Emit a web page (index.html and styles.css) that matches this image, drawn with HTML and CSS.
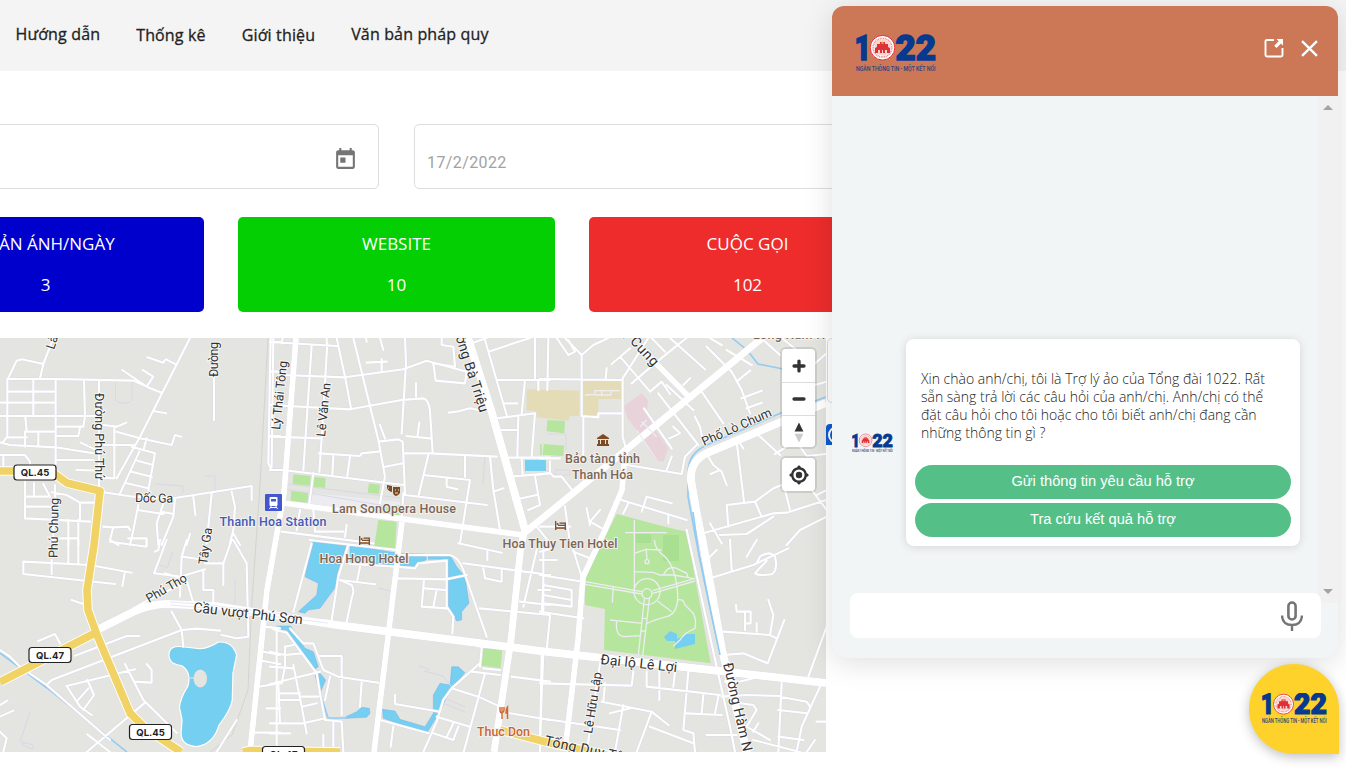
FILE: index.html
```html
<!DOCTYPE html>
<html lang="vi">
<head>
<meta charset="utf-8">
<title>Thống kê - 1022</title>
<link rel="stylesheet" href="styles.css">
</head>
<body>
<svg class="sprite" aria-hidden="true">
  <symbol id="logo" viewBox="0 0 80 38">
    <g class="logo-digits"><text x="-1.500" y="26.200" textLength="16.500" lengthAdjust="spacingAndGlyphs">1</text>
    <text x="39.500" y="26.200" textLength="40.500" lengthAdjust="spacingAndGlyphs">22</text></g>
    <circle cx="26.500" cy="13.700" r="12.300" fill="#fff" stroke="#df3038" stroke-width="1"/>
    <circle cx="26.500" cy="13.700" r="9.300" fill="none" stroke="#e98a8b" stroke-width="1.800" stroke-dasharray="1 .7"/>
    <circle cx="26.500" cy="13.500" r="8.200" fill="#f9d4cf"/>
    <path d="M19 19v-5l2-1v-3h3V8h5v2h3v3l2 1v5h-3v-3h-2v3h-2v-3h-1v3h-2v-3h-2v3z" fill="#df3038"/>
    <circle cx="26.500" cy="9" r="1.200" fill="#f29b32"/>
    <text class="logo-tag" x="0" y="36.500" textLength="79.500" lengthAdjust="spacingAndGlyphs">NGÀN THÔNG TIN - MỘT KẾT NỐI</text>
  </symbol>
  <symbol id="bed" viewBox="0 0 11 9"><path d="M.7 0v9M.7 7h9.600v2M3 4.300h7.300V7M4.500 2.200h5.800v2" fill="none" stroke="#7d4a24" stroke-width="1.300"/><circle cx="2.600" cy="3" r="1" fill="#7d4a24"/></symbol>
</svg>

<header class="topbar">
  <nav class="menu">
    <a class="menu-item">Hướng dẫn</a>
    <a class="menu-item menu-item-low">Thống kê</a>
    <a class="menu-item menu-item-low">Giới thiệu</a>
    <a class="menu-item">Văn bản pháp quy</a>
  </nav>
</header>

<main class="content">
  <section class="filters">
    <div class="field field-from">
      <svg class="cal" viewBox="0 0 24 24"><path fill="#757575" d="M19 3h-1V1h-2v2H8V1H6v2H5c-1.110 0-1.990.9-1.990 2L3 19c0 1.100.89 2 2 2h14c1.100 0 2-.9 2-2V5c0-1.100-.9-2-2-2zm0 16H5V8h14v11zM7 10h5v5H7z"/></svg>
    </div>
    <div class="field field-to">17/2/2022</div>
  </section>
  <section class="stats">
    <div class="stat stat-blue"><span>PHẢN ÁNH/NGÀY</span><span>3</span></div>
    <div class="stat stat-green"><span>WEBSITE</span><span>10</span></div>
    <div class="stat stat-red"><span>CUỘC GỌI</span><span>102</span></div>
  </section>
  <section class="map-row">
    <div class="map">
      <svg class="map-canvas" viewBox="0 338 826 414">
        <defs>
          <g id="minor">
            <g transform="translate(0 330) scale(.33333)">
              <path d="M22 150L50 92 65 88 130 102 160 24M130 102L120 145M22 147H165L400 152M22 147V320L8 337M22 185H165M0 218H165M0 258H290M100 150V258M167 150V400M252 152L255 260 250 290H167M76 262L80 305H165M75 305V350M20 322H80M115 308V345M0 337L30 345 167 352 280 370M167 318H235L240 292M297 150V480M242 338L285 358M167 390H280M310 285L350 290 378 278M343 290V445L300 442M305 345H400M350 305L420 325 515 345 525 315 543 320M570 24L420 320 350 445M400 152L440 170 485 188M367 120L440 170 460 140 428 120M442 82L490 98Q498 82 505 92L528 103M460 243L498 250M440 325L432 355M395 350L465 370 445 480M418 365L360 490M412 392L460 405M395 425L455 440M380 460L445 475M642 140V270"/>
              <path d="M300 485L400 500 520 505 755 468V510M580 500L586 555M635 490L620 640M695 485L705 530 700 600 690 640M700 610L720 645M230 420L300 422M0 375H75L90 395V430M10 380V410M75 455V565M75 500H150M75 530H160M75 565L270 575M102 460V498M130 462L150 500M165 465V500M155 487L200 495 240 518H280M240 518V570M205 570V645M235 570V645M160 510V640M160 625H235M412 540L490 552M415 525L400 600 390 645M490 520L470 580 475 645M525 505L520 560 485 645M485 545L520 552M310 590L340 592 330 630 355 645M340 592L385 590 390 600M385 625H440V645M570 612L560 645M812 24L805 400 815 420H840M820 36H840M812 125H840M812 318H840"/>
            </g>
            <g transform="translate(270 330) scale(.33333)">
              <path d="M0 36L200 48M38 24L35 40M10 24L5 410M125 46L100 420M172 40L155 325M170 24V40M200 24L225 140 243 235M250 24L325 330 345 440 330 520M40 135L225 142 400 118 470 92 590 125M290 98L350 95M335 88V125M330 24L340 60M288 24L290 35M405 24L408 100 395 310M438 160V200M490 100L497 152 585 160 590 125M0 225L240 238 395 210 460 205Q478 212 480 245L488 368M537 248L560 245 600 235 625 240M0 320L155 325 148 425M148 370L270 378 275 370 325 365M190 378L187 435M240 380L232 438M330 285L345 325M325 335L385 328 398 335 405 490M345 410L400 400M410 318L480 325M448 278L443 315M405 370L480 370 680 380"/>
              <path d="M475 375L445 500M460 435L600 450 570 640M530 445V470L562 478M585 378V440M660 380L670 480 690 600M0 420H40L400 465M405 495L650 525M670 485L700 475M515 24V45L550 50 555 110 490 100M605 40L650 24M645 30L710 255M655 65L780 24M680 150H840M795 24V150M805 150V180M765 150L755 250M700 220H742M680 265L795 250 785 380M745 260L742 380M680 300H742M710 383H840M720 440L840 430M755 385L758 435M795 440L810 525 775 540M730 510L800 495M130 430L118 520M400 490L395 565M800 590L840 640M35 605L310 640M90 540L80 600M130 540L135 605H220M230 585L225 620"/>
            </g>
            <g transform="translate(540 330) scale(.33333)">
              <path d="M25 24L22 180M0 147L245 150M85 30L105 65 85 75M50 24L85 75M75 24L125 75V255M125 75L160 45 205 24M200 115L197 145M248 145L325 24M240 80L330 185M215 102L270 55M275 160L345 100 400 55 440 24M330 185L365 155 390 192M248 145V320L262 370M125 258L175 262V250H245M130 262V385M0 385H60M335 24L375 65M390 24L495 118M510 24L545 45M355 190L475 345M312 235L395 355M380 165L460 240M430 165L450 145M485 185L550 280M465 260L480 290 490 340M500 50L575 125 605 180 630 250M590 155L630 122M605 205L665 182M620 235L665 218M560 60L635 105M670 30L720 75M725 24L770 60M825 100L860 70M825 165L860 155M655 315L720 375M780 350L800 378 860 372M400 290L420 310 388 325M262 405L425 432 435 380 470 345M395 380L380 420"/>
              <path d="M590 335L612 515M600 340L610 355M505 380L520 405 545 425 560 465M512 432L540 420M705 372L740 350M490 610L700 550 740 548 860 510M565 590L560 525 645 515 700 475 740 460M645 515L665 560M510 580L545 640M540 615L620 612 700 560M735 480L750 540M800 460L860 540M830 495L860 480M860 560L780 600 740 645M-10 435L30 428 40 440H65L100 485M30 395V425M245 510L440 570M265 520L250 550M320 500L305 545M320 500L395 520M385 555V580M140 535L150 585M180 540L150 575 195 600M75 530L90 640M0 590H90"/>
            </g>
            <g transform="translate(0 540) scale(.33333)">
              <path d="M70 65L270 75 395 98M70 65V102L345 132M155 60V102M205 0V70M235 0V72M375 95L367 138M215 180L250 192M330 5L440 20V0M480 0L475 30 465 35M500 0L462 100 540 110 615 88M560 0L545 50 540 170M550 50L600 58M495 100L560 120 580 190M610 90V150H640V185M615 70H670L695 0M670 70V135M700 0L740 70 745 290 710 295 665 285M115 303L165 282 180 310M225 347L380 288H418M140 435L155 420 545 270 590 266 660 272M515 215L545 270 550 320M200 438L405 388M200 438L240 500 275 525M262 420L282 465 250 510M265 445L230 485M375 372L430 480 530 578M402 425L455 428V390L440 372M435 488L260 636M262 583L330 636M0 330L30 350 60 380 140 435 330 600M0 495L22 482M0 530L40 512M0 575L20 595 10 636M710 540L650 636M790 260L840 265M790 335L840 345M785 362L840 372M775 440L840 430M800 505H840M765 578H840M830 265V630M400 205L445 180 540 135"/>
            </g>
            <g transform="translate(270 540) scale(.33333)">
              <path d="M125 10L70 215M120 0L380 30M235 15L205 110 185 240M210 120L245 135Q255 150 245 175L230 245M210 120L315 133M272 70L262 120M240 72L380 80 435 85 445 70 530 62V200L550 230 547 280M395 45L540 45Q565 50 580 90L650 290M380 115L530 118 590 105M462 120L455 200 530 205M465 145L525 150M500 150L490 200M565 10L695 38M652 30V60M580 70L840 105M640 85L645 115 695 125V90M630 205L840 225M800 30L760 200M750 185L840 195M820 30V220M805 150H840M10 268L50 278 140 400 150 460 165 540 215 545 220 636M60 265L100 310H130L160 390 205 410 325 428M145 348H215V410M180 410L165 480M0 335L45 345 95 340M45 320L70 315M45 320V380L35 430M0 380L70 385M0 432L150 395M70 375L95 500 110 580M25 460H90M25 480H90M95 500L140 490M90 470H145M25 430L30 550M0 550H100L165 535M60 580H0M215 410V525M275 425L270 500M160 585V636M190 545V636"/>
              <path d="M375 465V492L510 515M330 540L475 580M370 560L362 620M630 370L545 445 520 480 500 545 460 636M545 445L625 470 690 500M645 400L580 640M605 395L690 405M640 385L690 390M635 325L630 380M500 530L600 560M550 550L530 590M490 580L550 600 565 560M725 410L840 425M720 520L840 540M820 335L810 600M630 320H690"/>
            </g>
            <g transform="translate(540 540) scale(.33333)">
              <path d="M0 105L130 125M100 30L125 110M0 60H50M0 35L40 25M150 55L100 35M10 135L95 150V200L10 190M10 130L5 220M10 165L95 180M0 215L130 235M30 230L20 330M5 340L0 636M510 115L640 75 745 25M510 50L530 30M575 90L570 0M620 50L650 0M680 62L645 100Q655 108 695 103 715 90 705 50 690 30 660 50L650 70M550 275L690 285 710 295M588 195L590 215H632V250H615M615 215V270M650 250V275M685 180L700 225 690 285M733 240L683 370 610 340 550 345M858 265L805 410M0 430L275 437L280 395M195 430L190 485M185 485L335 515 385 555M210 520L270 505M250 495L225 636M0 535L240 570M180 370L140 636M320 395V440L540 465M358 390V480M405 395L400 440M445 395L430 570 460 580 465 636M490 465L485 520M440 520L545 525M535 470L525 520M440 -30L530 380 550 470 570 560 585 636M335 515L290 636M330 560L460 610"/>
              <path d="M545 470L620 465 720 468M570 485L640 495 650 510 620 560 690 600M500 585H590M640 575L655 550M725 430L715 636M720 470L800 485 810 500M715 510L800 520M715 590L790 600M640 600L780 636M840 440L785 560 770 636M830 545H860M800 636L825 600M580 430L640 415M555 425H590"/>
            </g>
          </g>
          <g id="major">
            <g class="w1"><path d="M296 338L284 493 274 550 267 590 250 752M283 503L523 535M402 522L374 752M643 350L689 397M625 453L622 490 605 530 583 577 578 640 566 742"/></g>
            <g class="w2"><path d="M523 534L610 463 762 338M525 530L521 545 511 640 494 752"/></g>
            <g class="w3"><path d="M468 338L492 413 525 530M826 403L707 453Q690 461 691 480L697 515 703 543 722 650 747 752M97 630L133 612Q150 604 167 604L215 606 337 625 510 647 540 651 826 683"/></g>
          </g>
          <g id="highway">
            <path d="M0 471H37L52 472 67 483 100 491 94 545 87 590 88 610 97 635 130 713 145 728 181 752M0 682L97 632M500 730L550 743 610 756M243 752L250 750.500 340 752"/>
          </g>
        </defs>
        <rect y="338" width="826" height="414" fill="#e4e4e0"/>
        <g fill="#b6e59d">
          <g transform="translate(540 330) scale(.33333)"><path d="M22 270L75 273 73 310 20 304ZM12 342L72 347 70 378 8 374ZM0 342H5V375H0Z"/></g>
          <path transform="translate(540 540) scale(.33333)" d="M230 -78L375 -40 440 -25 512 370 192 330 195 207 135 195V110Z"/>
        </g>
        <path fill="#a9df90" d="M663 535H679V561H663ZM636 534H651V543H636Z"/>
        <g fill="#e4dcb7" transform="translate(540 330) scale(.33333)"><path d="M130 152H243V207H175V255H130ZM-40 178L118 182V258H90L85 272 -10 262V245L-40 240Z"/></g>
        <path transform="translate(540 330) scale(.33333)" fill="#e8d3db" d="M252 228L305 190 325 212 318 250 340 290 385 355 370 395 345 390 290 300 262 265Z"/>
        <path fill="#ececf0" d="M313 493L400 502V520L310 507Z"/>
        <g fill="#b6e59d">
          <path transform="translate(270 330) scale(.33333)" d="M70 433L122 438 120 467 68 462ZM133 441L167 444 165 474 131 470ZM64 483L115 488 112 518 62 512ZM297 460L330 464 327 492 293 488ZM325 570L380 575 375 660 312 650ZM335 525H388V560L333 552Z"/>
          <path transform="translate(270 540) scale(.33333)" d="M640 325L697 328 692 385 635 377Z"/>
        </g>
        <g fill="#74cff0">
          <path stroke="#fff" stroke-width="7" paint-order="stroke" transform="translate(0 540) scale(.33333)" d="M510 335Q517 318 545 322L600 328Q630 325 655 308 695 305 708 345L697 400 695 480Q690 510 655 555 640 610 590 618 545 615 545 580L548 540 540 500Q545 470 565 440 578 395 545 375 502 370 510 335Z"/>
          <path stroke="#6a9fec" stroke-width="1" transform="translate(270 540) scale(.33333)" d="M125 5L145 0 230 12 200 105 205 130 150 205 115 210 105 220 85 215 140 165 145 130 105 110ZM240 15L385 40 465 42 470 58 435 80 385 78 240 65ZM475 45H540L560 80 585 110 597 190 575 215V240L560 243 550 225 535 205V80L530 58H475ZM20 258H62L80 285 105 325 130 335 145 380 130 390 90 330 50 270 20 268ZM135 405L150 400 167 420 150 460ZM228 530L260 515 275 502 298 505 300 520 290 532 228 535ZM337 508L375 513 390 538 465 560 490 520V465L510 430 540 435 545 380H565L585 398 540 450 510 515 470 580 340 535Z"/>
          <path d="M525 460H546V471H525ZM664 637L670 631 677 634V639L687 634H695V644L675 649V641H667Z"/>
        </g>
        <ellipse cx="200.300" cy="678.500" rx="6.800" ry="9" fill="#e4e4e0"/>
        <path d="M188 678H194" stroke="#e4e4e0"/>
        <path class="river" d="M732 338L747 350 758 364 788 370M815 401L826 397M788 410L707 445Q688 453 688 473L688 497 699 555 720 655 747 752M0 653L47 688 127 752M320 693L328 718H348"/>
        <path class="rail" d="M268 338L260 485 252 600 248 690 232 735 210 752"/>
        <g class="thin"><path d="M115.500 382V398Q116 403 124 403T132 398V382M156 484L183 486V493M205 476H215V490M20 742L30 712M22 742L33 745V749L24 746ZM158 564L167 568 173 552M235 578V605M285 489L410 510M287 484L400 498M419 666L429 669 427 672M424 671L443 676 451 686M447 699L465 707M445 704L465 712M378 588L390 591M485 457L483 484M547 434H566V450M555 470H570V475H555ZM585 394H620M594 394V390H611V394"/></g>
        <use href="#minor" class="road-casing"/>
        <use href="#major" class="major-casing"/>
        <use href="#minor" class="road-fill"/>
        <use href="#major" class="major-fill"/>
        <path class="river" d="M693 512L699 555 720 655"/>
        <path d="M170 602L200 604 325 619M170 605L195 607 328 623" fill="none" stroke="#dcdce9" stroke-width=".7"/>
        <use href="#highway" class="hwy-casing"/>
        <use href="#highway" class="hwy-fill"/>
        <g class="paths" transform="translate(540 540) scale(.33333)">
          <circle cx="321" cy="155" r="39"/><circle cx="321" cy="161" r="15"/><circle cx="321" cy="65" r="6"/>
          <path d="M283 -60V150M135 125L305 155M135 133L305 162M338 152L465 115M338 160L465 123M313 177L295 345M328 177L308 348M305 235H318M302 273H317M318 25L321 58M283 40L318 28 365 30M283 95L340 97 360 105 400 105M343 0Q345 30 375 50 405 80 412 150T380 230 318 252M210 240L308 250M230 245Q225 290 255 290L300 287M352 183L395 215M220 140L217 188M370 105Q385 75 410 85L440 100 445 115M400 105L460 115M413 180Q430 175 435 195L460 220Q470 240 465 265 430 280 420 300L400 318M255 -22H380"/>
        </g>
        <g class="paths" transform="translate(540 330) scale(.33333)"><path d="M135 195L165 193V182H240M185 180V195M213 180V195M165 195H213M290 300L350 390M300 290L320 270M305 275L350 320"/></g>

        <g class="street">
          <text transform="translate(54 350) rotate(-72)">Làng</text>
          <text transform="translate(218 377) rotate(-90)" textLength="35">Đường</text>
          <text transform="translate(95 393) rotate(90)" textLength="87">Đường Phú Thứ</text>
          <text transform="translate(57.500 558) rotate(-89)" textLength="60">Phú Chung</text>
          <text transform="translate(135 502) rotate(1)" textLength="38">Dốc Ga</text>
          <text transform="translate(207 565) rotate(-82)" textLength="37">Tây Ga</text>
          <text transform="translate(149 603) rotate(-30)" textLength="45">Phú Thọ</text>
          <text class="big" transform="translate(193 612) rotate(6.500)" textLength="110">Cầu vượt Phú Sơn</text>
          <text transform="translate(280 430) rotate(-84)" textLength="69">Lý Thái Tông</text>
          <text transform="translate(325 437) rotate(-84)" textLength="54">Lê Văn An</text>
          <text class="big" transform="translate(480 413) rotate(72)" text-anchor="end" textLength="98">Đường Bà Triệu</text>
          <text class="big" transform="translate(653 367) rotate(47)" text-anchor="end" textLength="57">Trị Cung</text>
          <text transform="translate(704 446) rotate(-24)" textLength="75">Phố Lò Chum</text>
          <text class="big" transform="translate(600 664) rotate(6)" textLength="77">Đại lộ Lê Lợi</text>
          <text transform="translate(592 734) rotate(-81)" textLength="62">Lê Hữu Lập</text>
          <text class="big" transform="translate(723 664) rotate(77)" textLength="110">Đường Hàm Nghi</text>
          <text class="big" transform="translate(544 745) rotate(12)" textLength="88">Tống Duy Tân</text>
        </g>
        <g class="poi">
          <text x="394" y="513" textLength="124">Lam SonOpera House</text>
          <text x="364" y="563" textLength="89">Hoa Hong Hotel</text>
          <text x="560" y="548" textLength="115">Hoa Thuy Tien Hotel</text>
          <text x="602.500" y="463" textLength="75">Bảo tàng tỉnh</text>
          <text x="602.500" y="479" textLength="61">Thanh Hóa</text>
          <text x="789" y="339" textLength="72">Long Nam H</text>
          <text class="station" x="273" y="526" textLength="107">Thanh Hoa Station</text>
          <text class="food" x="503.500" y="736" textLength="53">Thuc Don</text>
        </g>
        <g transform="translate(265 494)"><rect width="17" height="17" rx="1" fill="#4457cf"/><rect x="4.500" y="3" width="8" height="9" rx="1" fill="#fff"/><path d="M6 5h5v2.500H6z" fill="#4457cf"/><path d="M4.500 15l1.800-3M12.500 15l-1.800-3M5 13.500h7" stroke="#fff" fill="none"/></g>
        <use href="#bed" x="359" y="536" width="11" height="9"/>
        <use href="#bed" x="555" y="521" width="11" height="9"/>
        <g fill="#7d4a24"><path d="M597 438L603 434 609 438V439H597ZM598 440H600V444H598ZM601 440H605V444H601ZM606 440H608V444H606ZM597 444H609V446H597Z"/><path d="M387 485L392 486V492Q388 491 387 488ZM393 487H400V493Q398 496 396 496 393 495 393 492Z"/></g>
        <path d="M395 490H396M398 490H399M395 493H398M388 488H389" stroke="#e4e4e0"/>
        <path d="M500 707V710Q500 713 502 713V719M504 707V710Q504 712 502 713V707M507.500 719V707Q506 709 506 713H507.500" stroke="#d4662d" stroke-width="1.400" fill="none"/>
        <g class="shield">
          <rect x="14" y="465" width="42" height="15" rx="3"/><text x="35" y="476">QL.45</text>
          <rect x="29" y="647.500" width="42" height="15" rx="3"/><text x="50" y="658.500">QL.47</text>
          <rect x="129.500" y="724.500" width="42" height="15" rx="3"/><text x="150.500" y="735.500">QL.45</text>
          <rect x="262.500" y="746.500" width="42" height="15" rx="3"/><text x="283.500" y="758">QL.47</text>
        </g>
      </svg>
      <div class="controls">
        <div class="ctl-group">
          <button class="ctl"><svg viewBox="0 0 29 29"><path d="M14.500 10v9M10 14.500h9" stroke="#333" stroke-width="3" stroke-linecap="round"/></svg></button>
          <button class="ctl"><svg viewBox="0 0 29 29"><path d="M10 14.500h9" stroke="#333" stroke-width="3" stroke-linecap="round"/></svg></button>
          <button class="ctl"><svg viewBox="0 0 29 29"><path d="M10.500 14l4-8 4 8z" fill="#333"/><path d="M10.500 16l4 8 4-8z" fill="#ccc"/></svg></button>
        </div>
        <div class="ctl-group">
          <button class="ctl"><svg viewBox="0 0 20 20"><path fill="#333" d="M10 4C9 4 9 5 9 5v.1A5 5 0 0 0 5.100 9H5s-1 0-1 1 1 1 1 1h.1A5 5 0 0 0 9 14.900v.1s0 1 1 1 1-1 1-1v-.1a5 5 0 0 0 3.900-3.900h.1s1 0 1-1-1-1-1-1h-.1A5 5 0 0 0 11 5.100V5s0-1-1-1zm0 2.500a3.500 3.500 0 1 1 0 7 3.500 3.500 0 1 1 0-7z"/><circle cx="10" cy="10" r="2" fill="#333"/></svg></button>
        </div>
      </div>
    </div>
    <aside class="side">
      <div class="side-card"></div>
      <div class="side-icon"><svg viewBox="0 0 22 21"><circle cx="11" cy="11" r="8" fill="none" stroke="#fff" stroke-width="2"/></svg></div>
    </aside>
  </section>
</main>

<section class="chat">
  <header class="chat-head">
    <svg class="chat-logo"><use href="#logo"/></svg>
    <div class="chat-actions">
      <svg class="icon-open" viewBox="0 0 20 20"><path d="M10 2H3Q1.500 2 1.500 3V17Q1.500 18.500 3 18.500H17Q18.500 18.500 18.500 17V10" fill="none" stroke="#fff" stroke-width="1.900"/><path d="M12.500 1H19V7.500L17 5.500 12.500 10 10.200 7.700 14.700 3.200Z" fill="#fff"/></svg>
      <svg class="icon-close" viewBox="0 0 16 16"><path d="M1 1L15 15M15 1L1 15" stroke="#fff" stroke-width="2.200"/></svg>
    </div>
  </header>
  <div class="chat-body">
    <div class="messages">
      <svg class="avatar"><use href="#logo"/></svg>
      <div class="bubble">
        <p class="bubble-text">Xin chào anh/chị, tôi là Trợ lý ảo của Tổng đài 1022. Rất<br>sẵn sàng trả lời các câu hỏi của anh/chị. Anh/chị có thể<br>đặt câu hỏi cho tôi hoặc cho tôi biết anh/chị đang cần<br>những thông tin gì ?</p>
        <button class="choice">Gửi thông tin yêu cầu hỗ trợ</button>
        <button class="choice">Tra cứu kết quả hỗ trợ</button>
      </div>
    </div>
    <div class="scrollbar"><i class="arrow-up"></i><i class="arrow-down"></i></div>
  </div>
  <div class="composer">
    <svg class="mic" viewBox="0 0 22 30"><rect x="7.400" y="1.500" width="7.200" height="17" rx="3.600" fill="none" stroke="#757575" stroke-width="2.600"/><path d="M1 14.500Q1.500 24 11 24T21 14.500M11 24V30" fill="none" stroke="#757575" stroke-width="2.400"/></svg>
  </div>
</section>
<div class="launcher"><svg class="launcher-logo"><use href="#logo"/></svg></div>
</body>
</html>
```
FILE: styles.css
```css
* { box-sizing: border-box; }
html, body { margin: 0; height: 775px; overflow: hidden; }
body { background: #fff; font-family: "Open Sans", "Noto Sans", sans-serif; color: #222; }
button { border: 0; padding: 0; font: inherit; display: block; }
.sprite { position: absolute; width: 0; height: 0; }

.logo-digits text { font: 900 35.500px Roboto, sans-serif; fill: #06398f; stroke: #06398f; stroke-width: 1.500px; }
.logo-tag { font: 500 8px Roboto, sans-serif; fill: #2b4480; }

.topbar { height: 71px; background: #f4f4f4; }
.menu { display: flex; gap: 36px; padding: 23px 0 0 15.5px; }
.menu-item { font-size: 16px; letter-spacing: .15px; -webkit-text-stroke: .3px #222; line-height: 22px; white-space: nowrap; }
.menu-item-low { padding-top: 1px; }

.filters { display: flex; gap: 35px; padding-top: 53px; margin-left: -6px; }
.field { height: 65px; border: 1px solid #ddd; border-radius: 5px; flex: none; }
.field-from { width: 385px; display: flex; justify-content: flex-end; align-items: center; padding: 6px 20px 0 0; }
.cal { width: 25px; height: 25px; }
.field-to { width: 500px; padding: 28px 12px 0; font: 16px/20px Roboto, sans-serif; letter-spacing: .4px; color: #a2a2a2; }

.stats { display: flex; gap: 34px; padding-top: 28px; margin-left: -113px; }
.stat { flex: none; width: 317px; height: 95px; border-radius: 5px; color: #fff; font-size: 17px; line-height: 22px; display: flex; flex-direction: column; align-items: center; gap: 19px; padding-top: 16px; }
.stat-blue { background: #0000cd; }
.stat-green { background: #03cf03; }
.stat-red { background: #ee2c2c; }

.map-row { display: flex; margin-top: 26px; }
.map { position: relative; width: 826px; height: 414px; flex: none; overflow: hidden; }
.map-canvas { display: block; width: 826px; height: 414px; }
.road-casing { fill: none; stroke: #dadae8; stroke-width: 9px; }
.road-fill { fill: none; stroke: #fff; stroke-width: 6.3px; stroke-linecap: round; stroke-linejoin: round; }
.w1 { stroke-width: 5.8px; }
.w2 { stroke-width: 7px; }
.w3 { stroke-width: 8px; }
.major-casing { fill: none; stroke: #d8d8e8; filter: drop-shadow(0 0 .6px #c9c9df); }
.major-fill { fill: none; stroke: #fff; stroke-linejoin: round; }
.hwy-casing { fill: none; stroke: #fff; stroke-width: 9.500px; stroke-linejoin: round; }
.hwy-fill { fill: none; stroke: #f1d264; stroke-width: 7.600px; stroke-linejoin: round; }
.river { fill: none; stroke: #8fcbf3; stroke-width: 1.6px; }
.rail { fill: none; stroke: #ccccc8; stroke-width: .7px; }
.thin { fill: none; stroke: #d8d8e6; stroke-width: 1px; }
.paths { fill: none; stroke: #ededf2; stroke-width: 4px; }
.street text { font: 12.5px Roboto, sans-serif; fill: #333; stroke: #fff; stroke-width: 2px; stroke-opacity: .7; paint-order: stroke; }
.street .big { font-size: 14px; }
.poi text { font: 500 12.5px Roboto, sans-serif; fill: #7c6556; text-anchor: middle; stroke: #f1f1ee; stroke-width: 2px; paint-order: stroke; }
.poi .station { fill: #4658b8; }
.poi .food { fill: #cc642f; }
.shield rect { fill: #fff; stroke: #222; stroke-width: 1.2px; }
.shield text { font: 700 9.5px Inter, sans-serif; fill: #222; text-anchor: middle; }

.controls { position: absolute; top: 11px; right: 11px; display: flex; flex-direction: column; gap: 11px; }
.ctl-group { width: 33px; border-radius: 4px; overflow: hidden; box-shadow: 0 0 0 2px rgba(0,0,0,.1); background: #fff; }
.ctl { width: 33px; height: 33px; background: #fff; }
.ctl + .ctl { border-top: 1px solid #ddd; height: 32.5px; }
.ctl svg { display: block; width: 34px; height: 32px; }

.side { flex: none; width: 480px; padding-left: 1px; }
.side-card { height: 65px; border: 1px solid #ddd; border-radius: 5px; }
.side-icon { width: 22px; height: 21px; margin: 21px 0 0 -1px; background: #0d5ad1; border-radius: 4px 0 0 0; }
.side-icon svg { display: block; width: 22px; height: 21px; }

.chat { position: absolute; left: 832px; top: 6px; width: 506px; height: 652px; border-radius: 12px 12px 16px 16px; overflow: hidden; background: #f1f5f6; box-shadow: 0 5px 30px rgba(0,0,0,.13); display: flex; flex-direction: column; }
.chat-head { height: 90px; flex: none; background: #cc7857; display: flex; justify-content: space-between; align-items: flex-start; padding: 28px 20px 0 24px; }
.chat-logo { width: 80px; height: 38px; }
.chat-actions { display: flex; align-items: center; gap: 17px; padding-top: 4px; }
.icon-open { width: 20px; height: 20px; }
.icon-close { width: 17px; height: 17px; }
.chat-body { display: flex; height: 507px; flex: none; }
.messages { flex: 1; display: flex; gap: 13px; padding: 243px 18px 0 20px; align-items: flex-start; }
.avatar { width: 41px; height: 20px; margin-top: 94px; flex: none; }
.bubble { width: 394px; height: 207px; background: #fff; border-radius: 8px; box-shadow: 0 1px 10px rgba(0,0,0,.13); padding: 31px 9px 0; }
.bubble-text { margin: 0 0 23px; padding-left: 6px; font-size: 14px; font-weight: 300; line-height: 18px; color: #222; white-space: nowrap; }
.choice { width: 100%; height: 34px; margin-bottom: 4px; padding-bottom: 2px; border-radius: 17px; background: #54bf87; color: #fff; font: 14.67px "Liberation Sans", sans-serif; }
.scrollbar { width: 20px; background: #f1f1f1; display: flex; flex-direction: column; justify-content: space-between; align-items: center; padding: 9px 0; }
.arrow-up, .arrow-down { border: 5px solid transparent; width: 0; height: 0; }
.arrow-up { border-top: 0; border-bottom-color: #a3a3a3; }
.arrow-down { border-bottom: 0; border-top-color: #a3a3a3; }
.composer { width: 471px; height: 45px; margin: -10px 0 0 18px; background: #fff; border-radius: 8px; display: flex; justify-content: flex-end; align-items: center; padding-right: 18px; position: relative; }
.mic { width: 22px; height: 30px; }
.launcher { position: absolute; left: 1249px; top: 664px; width: 90px; height: 90px; border-radius: 45px 45px 0 45px; background: #fed12b; box-shadow: 0 3px 12px rgba(0,0,0,.25); display: flex; justify-content: center; padding-top: 29px; }
.launcher-logo { width: 65px; height: 31px; }
```
